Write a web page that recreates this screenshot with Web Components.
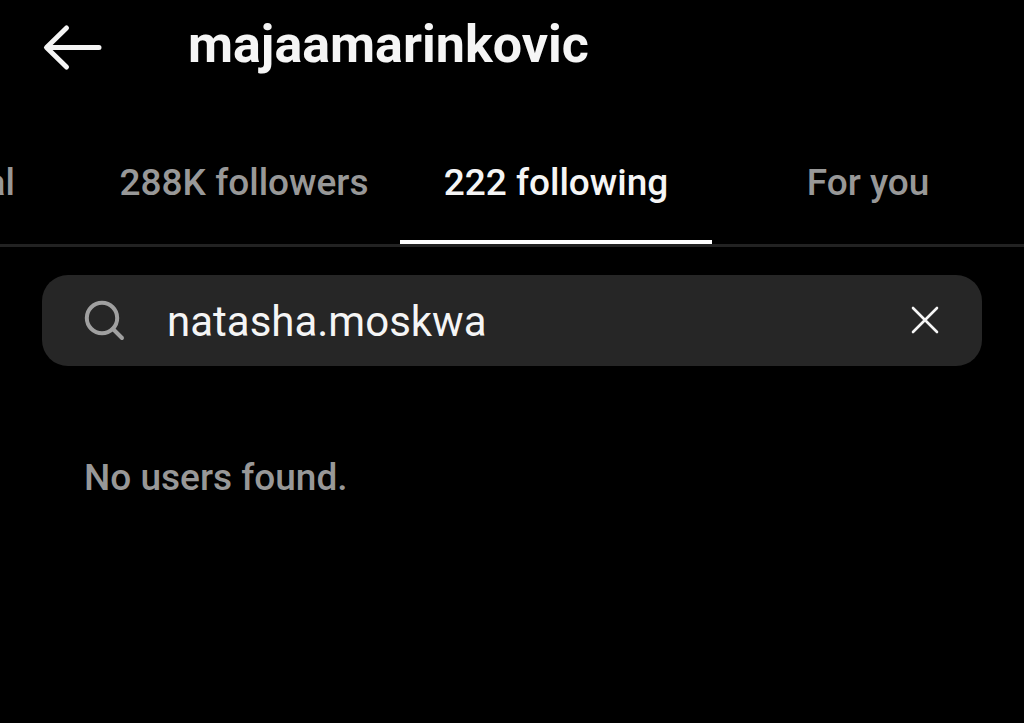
<!DOCTYPE html>
<html lang="en">
<head>
<meta charset="utf-8">
<meta name="viewport" content="width=device-width, initial-scale=1">
<title>majaamarinkovic</title>
<style>
  html { background: #000; }
  body { margin: 0; background: #000; color: #f5f5f5; font-family: Roboto, "Noto Sans", sans-serif; overflow-x: hidden; }
</style>
</head>
<body>
<follow-page></follow-page>

<template id="profile-header">
  <style>
    :host { display: block; }
    header { display: flex; align-items: center; gap: 84px; height: 94px; padding: 0 42px; }
    button { display: flex; padding: 0; border: 0; background: none; color: inherit; }
    svg { display: block; width: 62px; height: 48px; }
    h1 { margin: 0; padding-bottom: 4px; font-size: 52px; line-height: 60px; font-weight: 700; }
  </style>
  <header>
    <button type="button" aria-label="Back">
      <svg viewBox="0 0 62 48" fill="none" stroke="currentColor" stroke-width="5" stroke-linecap="round" stroke-linejoin="round"><path d="M57 24.500H5M24.500 5 4.500 24.500 24.500 44"/></svg>
    </button>
    <h1><slot></slot></h1>
  </header>
</template>

<template id="tab-bar">
  <style>
    :host { display: block; }
    nav { display: flex; border-bottom: 3px solid #222; overflow: hidden; }
  </style>
  <nav role="tablist"><slot></slot></nav>
</template>

<template id="tab-item">
  <style>
    :host { display: block; flex: 1 1 0; min-width: 0; }
    :host([clipped]) { flex: 0 0 88px; }
    button { box-sizing: border-box; display: flex; justify-content: center; width: 100%; padding: 63px 0 31px; border: 0; border-bottom: 4px solid transparent; background: none; color: #989898; font: 500 37px/52px Roboto, "Noto Sans", sans-serif; white-space: nowrap; }
    :host([selected]) button { color: #f5f5f5; border-bottom-color: #fff; }
    :host([clipped]) button { justify-content: flex-end; padding-right: 73px; }
  </style>
  <button type="button" role="tab"><slot></slot></button>
</template>

<template id="search-field">
  <style>
    :host { display: block; padding: 28px 42px 0; }
    form { display: flex; align-items: center; height: 91px; padding: 0 42px; border-radius: 26px; background: #262626; }
    label { display: flex; color: #a0a0a0; margin-right: 42px; }
    svg { display: block; }
    .glass { width: 41px; height: 41px; }
    .cross { width: 30px; height: 31px; }
    input { box-sizing: border-box; flex: 1; min-width: 0; height: 61px; padding: 1px 0 0; border: 0; outline: 0; background: none; color: #f5f5f5; font: 400 42px/60px Roboto, "Noto Sans", sans-serif; }
    button { display: flex; padding: 0; border: 0; background: none; color: #f5f5f5; }
  </style>
  <form role="search">
    <label for="query" aria-label="Search">
      <svg class="glass" viewBox="0 0 41 41" fill="none" stroke="currentColor" stroke-width="4" stroke-linecap="round"><circle cx="18" cy="18" r="15.200"/><path d="m29 29 9 9"/></svg>
    </label>
    <input id="query" type="text" spellcheck="false" autocomplete="off">
    <button type="button" aria-label="Clear">
      <svg class="cross" viewBox="0 0 30 31" fill="none" stroke="currentColor" stroke-width="2.600" stroke-linecap="round"><path d="m3 3 24 24M27 3 3 27"/></svg>
    </button>
  </form>
</template>

<template id="empty-state">
  <style>
    :host { display: block; padding: 86px 84px 0; }
    p { margin: 0; color: #989898; font-size: 37px; line-height: 52px; font-weight: 500; }
  </style>
  <p role="status"><slot></slot></p>
</template>

<template id="follow-page">
  <style>:host { display: block; }</style>
  <profile-header>majaamarinkovic</profile-header>
  <tab-bar>
    <tab-item clipped>mutual</tab-item>
    <tab-item>288K followers</tab-item>
    <tab-item selected>222 following</tab-item>
    <tab-item>For you</tab-item>
  </tab-bar>
  <main>
    <search-field value="natasha.moskwa"></search-field>
    <empty-state>No users found.</empty-state>
  </main>
</template>

<script>
  class TemplateElement extends HTMLElement {
    constructor() {
      super();
      const template = document.getElementById(this.localName);
      this.attachShadow({ mode: "open" }).append(template.content.cloneNode(true));
    }
  }

  class ProfileHeader extends TemplateElement {}
  class TabBar extends TemplateElement {}
  class EmptyState extends TemplateElement {}
  class FollowPage extends TemplateElement {}

  class TabItem extends TemplateElement {
    connectedCallback() {
      this.shadowRoot.querySelector("button").setAttribute("aria-selected", String(this.hasAttribute("selected")));
    }
  }

  class SearchField extends TemplateElement {
    connectedCallback() {
      const input = this.shadowRoot.querySelector("input");
      input.value = this.getAttribute("value") || "";
      this.shadowRoot.querySelector("form").addEventListener("submit", (event) => event.preventDefault());
      this.shadowRoot.querySelector("button").addEventListener("click", () => {
        input.value = "";
        input.focus();
      });
    }
  }

  customElements.define("profile-header", ProfileHeader);
  customElements.define("tab-bar", TabBar);
  customElements.define("tab-item", TabItem);
  customElements.define("search-field", SearchField);
  customElements.define("empty-state", EmptyState);
  customElements.define("follow-page", FollowPage);
</script>
</body>
</html>
